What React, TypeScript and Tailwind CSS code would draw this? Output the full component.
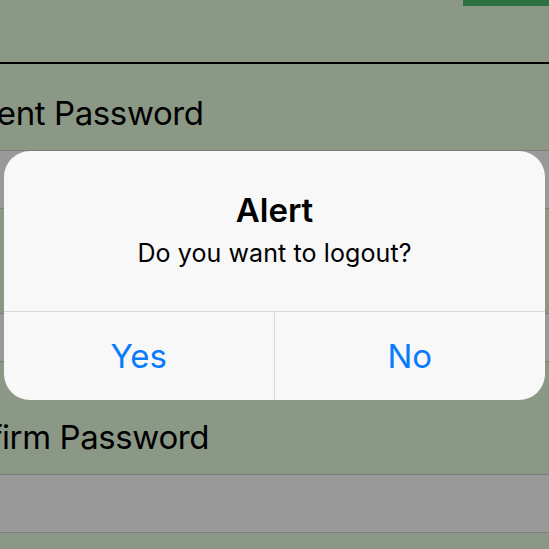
import React from "react";

function Campo(props: { label: string, recuo: string, topo: string, altura: string }) {
    return <div className={`${props.altura} overflow-hidden`}>
        <p className={`${props.topo} ${props.recuo} text-[33px] tracking-[-0.4px] leading-none text-black whitespace-nowrap`}>
            {props.label}
        </p>
    </div>
}

function Alerta() {
    return <div className="absolute left-[4px] top-[151px] w-[541px] h-[249px] rounded-[26px] bg-[#f8f8f8] flex flex-col overflow-hidden">
        <div className="h-[160px] flex flex-col items-center">
            <h1 className="pt-[43px] text-[33px] leading-none font-semibold text-black">Alert</h1>
            <p className="pt-[14px] text-[25px] tracking-[0.1px] leading-none text-black">Do you want to logout?</p>
        </div>
        <div className="flex-1 grid grid-cols-2 border-t border-[#d8d8d8]">
            <button className="flex items-center justify-center text-[33px] leading-none text-[#0a7aff] border-r border-[#d8d8d8]">Yes</button>
            <button className="flex items-center justify-center text-[33px] leading-none text-[#0a7aff]">No</button>
        </div>
    </div>
}

export default function App() {
    return <div className="relative w-[549px] h-[549px] overflow-hidden bg-[#8c9886] font-['Inter',sans-serif]">
        <header className="h-[62px] flex justify-end">
            <span className="w-[86px] h-[6px] bg-[#2b7343]" />
        </header>
        <div className="h-[2px] bg-black" />
        <Campo label="Current Password" recuo="ml-[-70px]" topo="pt-[33px]" altura="h-[86px]" />
        <div className="h-[59px] bg-[#999999] border-y border-[#7d7d7d]" />
        <Campo label="New Password" recuo="ml-[14px]" topo="pt-[40px]" altura="h-[104px]" />
        <div className="h-[49px] bg-[#999999] border-y border-[#7d7d7d]" />
        <Campo label="Confirm Password" recuo="ml-[-72px]" topo="pt-[59px]" altura="h-[112px]" />
        <div className="h-[59px] bg-[#999999] border-y border-[#7d7d7d]" />
        <Alerta />
    </div>
}
